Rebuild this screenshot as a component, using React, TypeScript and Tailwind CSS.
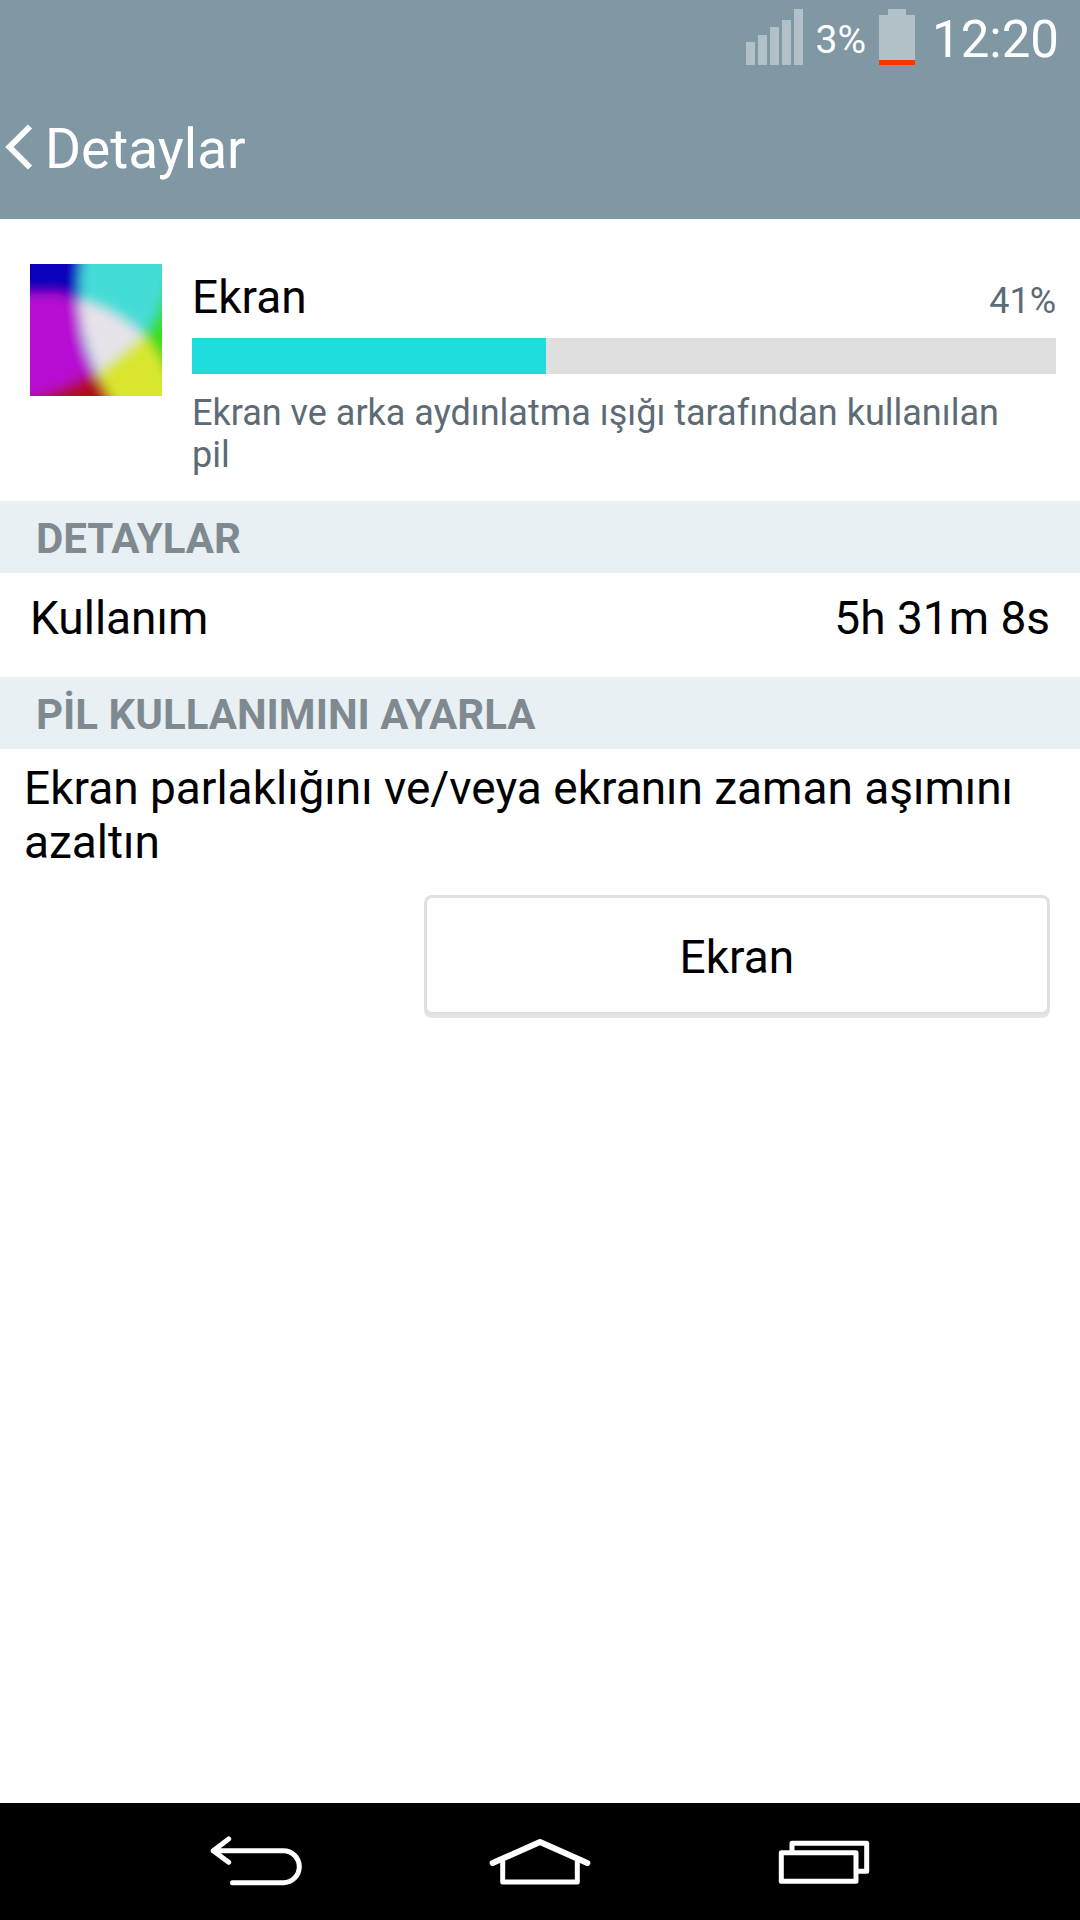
import React from 'react';

const signalBars = ['h-[23px]', 'h-[30px]', 'h-[38px]', 'h-[45px]', 'h-[56px]'];

function StatusBar() {
  return (
    <div className="flex items-end justify-end gap-[13px] h-[65px] pr-[21px]">
      <div className="flex items-end gap-[3px]">
        {signalBars.map((height) => (
          <span key={height} className={`w-[9px] bg-[#b2c1c8] ${height}`} />
        ))}
      </div>
      <span className="text-[39px] leading-[50px]">3%</span>
      <div className="flex flex-col items-center w-9 h-14 mr-1">
        <span className="w-[18px] h-[6px] bg-[#b2c1c8]" />
        <span className="w-9 flex-1 bg-[#b2c1c8]" />
        <span className="w-9 h-[5px] bg-[#ff3300]" />
      </div>
      <span className="text-[51px] leading-[50px]">12:20</span>
    </div>
  );
}

// Overlapping light circles: blue, magenta, cyan, yellow with a white core
function DisplayIcon() {
  return (
    <svg className="w-[132px] h-[132px] shrink-0" viewBox="0 0 132 132" aria-hidden="true">
      <defs>
        <filter id="soften" filterUnits="userSpaceOnUse" x="-40" y="-40" width="212" height="212">
          <feGaussianBlur stdDeviation="6" />
        </filter>
      </defs>
      <g filter="url(#soften)">
        <rect x="-40" y="-40" width="212" height="212" fill="#44dcd8" />
        <path d="M-40 -40H58Q48 0 50 40L-40 30Z" fill="#1000bc" />
        <path d="M-40 30H30Q46 33 50 42Q50 78 66 108L40 132L-40 144Z" fill="#b808d2" />
        <path d="M-40 142Q20 134 62 108L92 140V172H-40Z" fill="#b00a20" />
        <path d="M113 70Q130 52 136 16H172V124H134Z" fill="#38dc24" />
        <path d="M66 108Q94 90 113 70Q128 88 138 112L172 172H100Q84 140 66 108Z" fill="#dae62e" />
        <path d="M48 36Q86 46 113 72Q92 88 68 108Q54 78 48 36Z" fill="#e8e2ea" />
      </g>
    </svg>
  );
}

function SectionTitle({ children }: { children: React.ReactNode }) {
  return (
    <h2 className="h-[72px] pt-1 px-9 bg-[#e8f0f4] text-[42px] leading-[68px] font-bold text-[#7f8a90]">
      {children}
    </h2>
  );
}

function NavBar() {
  return (
    <nav className="grid grid-cols-3 h-[117px] px-[114px] bg-black text-white">
      <button type="button" aria-label="Geri" className="flex justify-center">
        <svg className="w-[92px] h-[117px]" viewBox="0 0 92 117" fill="none" stroke="currentColor" strokeWidth="5" strokeLinecap="round" strokeLinejoin="round">
          <path d="M18.7 36L3.2 47.7L18.7 59.3M3.2 47.7H73.3a16 16 0 0 1 0 32H22.5" />
        </svg>
      </button>
      <button type="button" aria-label="Ana ekran" className="flex justify-center">
        <svg className="w-[102px] h-[117px]" viewBox="0 0 102 117" fill="none" stroke="currentColor" strokeWidth="5" strokeLinecap="round" strokeLinejoin="round">
          <path d="M3.7 60L51 39L98.3 60" strokeWidth="6" />
          <path d="M13.7 57V79H88.3V57" />
        </svg>
      </button>
      <button type="button" aria-label="Son uygulamalar" className="flex justify-center">
        <svg className="w-[92px] h-[117px]" viewBox="0 0 92 117" fill="none" stroke="currentColor" strokeWidth="5" strokeLinejoin="round">
          <rect x="3.3" y="49.7" width="74.7" height="28.6" />
          <path d="M14 49V40.3H88.7V68.3H78" />
        </svg>
      </button>
    </nav>
  );
}

export default function App() {
  const usage = 41;

  return (
    <div className="min-h-screen flex flex-col bg-white text-black font-['Roboto',sans-serif]">
      <header className="bg-[#8097a4] text-white">
        <StatusBar />
        <div className="h-[154px] pt-12">
          <button type="button" className="flex items-center gap-3 pl-1">
            <svg className="w-[29px] h-[64px]" viewBox="0 0 29 64" fill="none" stroke="currentColor" strokeWidth="6" aria-hidden="true">
              <path d="M26 11.5L5.5 32L26 52.5" />
            </svg>
            <h1 className="pt-1 text-[55px] leading-[64px]">Detaylar</h1>
          </button>
        </div>
      </header>

      <main className="flex-1">
        <section className="flex items-start gap-[30px] pl-[30px] pr-6 pt-[45px] pb-[25px]">
          <DisplayIcon />
          <div className="flex-1 pt-[6px]">
            <div className="flex items-baseline justify-between">
              <span className="text-[46px] leading-[54px]">Ekran</span>
              <span className="text-[36px] leading-[42px] text-[#5c6b75]">{usage}%</span>
            </div>
            <div className="h-9 mt-[14px] bg-[#dfdfdf]">
              <div className="h-full bg-[#1fdddd]" style={{ width: `${usage}%` }} />
            </div>
            <p className="mt-[18px] pr-6 text-[36px] leading-[42px] text-[#5c6b75]">
              Ekran ve arka aydınlatma ışığı tarafından kullanılan pil
            </p>
          </div>
        </section>

        <SectionTitle>DETAYLAR</SectionTitle>
        <div className="flex justify-between px-[30px] pt-[18px] pb-8 text-[46px] leading-[54px]">
          <span>Kullanım</span>
          <span>5h 31m 8s</span>
        </div>

        <SectionTitle>PİL KULLANIMINI AYARLA</SectionTitle>
        <div className="px-6 pt-3 text-[46px] leading-[54px]">
          <p>Ekran parlaklığını ve/veya ekranın zaman aşımını azaltın</p>
        </div>
        <div className="flex justify-end pt-[26px] pr-[30px]">
          <button
            type="button"
            className="w-[58vw] h-[120px] pt-1 border-[3px] border-[#dde1e1] rounded-lg bg-white shadow-[0_3px_0_#e4e5e5] text-[46px] leading-[54px]"
          >
            Ekran
          </button>
        </div>
      </main>

      <NavBar />
    </div>
  );
}
